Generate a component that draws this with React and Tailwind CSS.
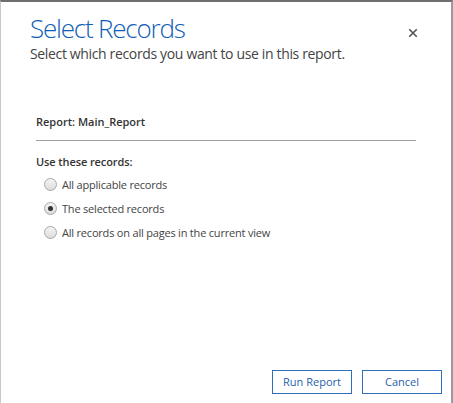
import React from "react";

const options = [
  { label: "All applicable records", checked: false },
  { label: "The selected records", checked: true },
  { label: "All records on all pages in the current view", checked: false },
];

const Radio = ({ checked }) => (
  <span className="w-[13px] h-[13px] rounded-full border border-[#a8a8a8] bg-gradient-to-b from-[#f4f4f4] to-[#dcdcdc] flex items-center justify-center">
    {checked && <span className="w-[5px] h-[5px] rounded-full bg-[#333]" />}
  </span>
);

const App = () => {
  return (
    <div className="w-[453px] h-[403px] bg-white border-t-2 border-t-[#6e6e6e] border-l border-l-[#c8c8c8] border-r-2 border-r-[#9a9a9a] flex flex-col font-['Open_Sans',sans-serif] text-[#444]">
      <div className="flex justify-between pl-[29px] pr-[31px] pt-[9px]">
        <div>
          <h1 className="text-[26px] leading-[34px] font-light tracking-[-1.2px] text-[#1160b7]">
            Select Records
          </h1>
          <p className="text-[14px] leading-[20px] -mt-[1px] tracking-[-0.35px] text-[#444]">
            Select which records you want to use in this report.
          </p>
        </div>
        <button className="mt-[16px] text-[#555] w-[12px] h-[12px]">
          <svg viewBox="0 0 12 12" width="10" height="10">
            <path d="M1.5 1.5 L10.5 10.5 M10.5 1.5 L1.5 10.5" stroke="#555" strokeWidth="2" />
          </svg>
        </button>
      </div>

      <div className="mx-[35px] mt-[50px]">
        <div className="text-[11px] font-semibold text-[#333] pb-[9px] border-b border-b-[#a0a0a0]">
          Report: Main_Report
        </div>
        <div className="text-[11px] font-semibold tracking-[-0.1px] text-[#333] mt-[13px]">
          Use these records:
        </div>
        <div className="flex flex-col gap-[7px] mt-[6px] pl-[8px]">
          {options.map((o) => (
            <label key={o.label} className="flex items-center gap-[5px] text-[11px] leading-[17px] tracking-[-0.2px] text-[#444]">
              <Radio checked={o.checked} />
              {o.label}
            </label>
          ))}
        </div>
      </div>

      <div className="mt-auto flex justify-end gap-[10px] pr-[9px] pb-[9px]">
        <button className="w-[80px] h-[24px] border border-[#2f6fb8] text-[11px] text-[#1f5fae]">
          Run Report
        </button>
        <button className="w-[80px] h-[24px] border border-[#2f6fb8] text-[11px] text-[#1f5fae]">
          Cancel
        </button>
      </div>
    </div>
  );
};

export default App;
